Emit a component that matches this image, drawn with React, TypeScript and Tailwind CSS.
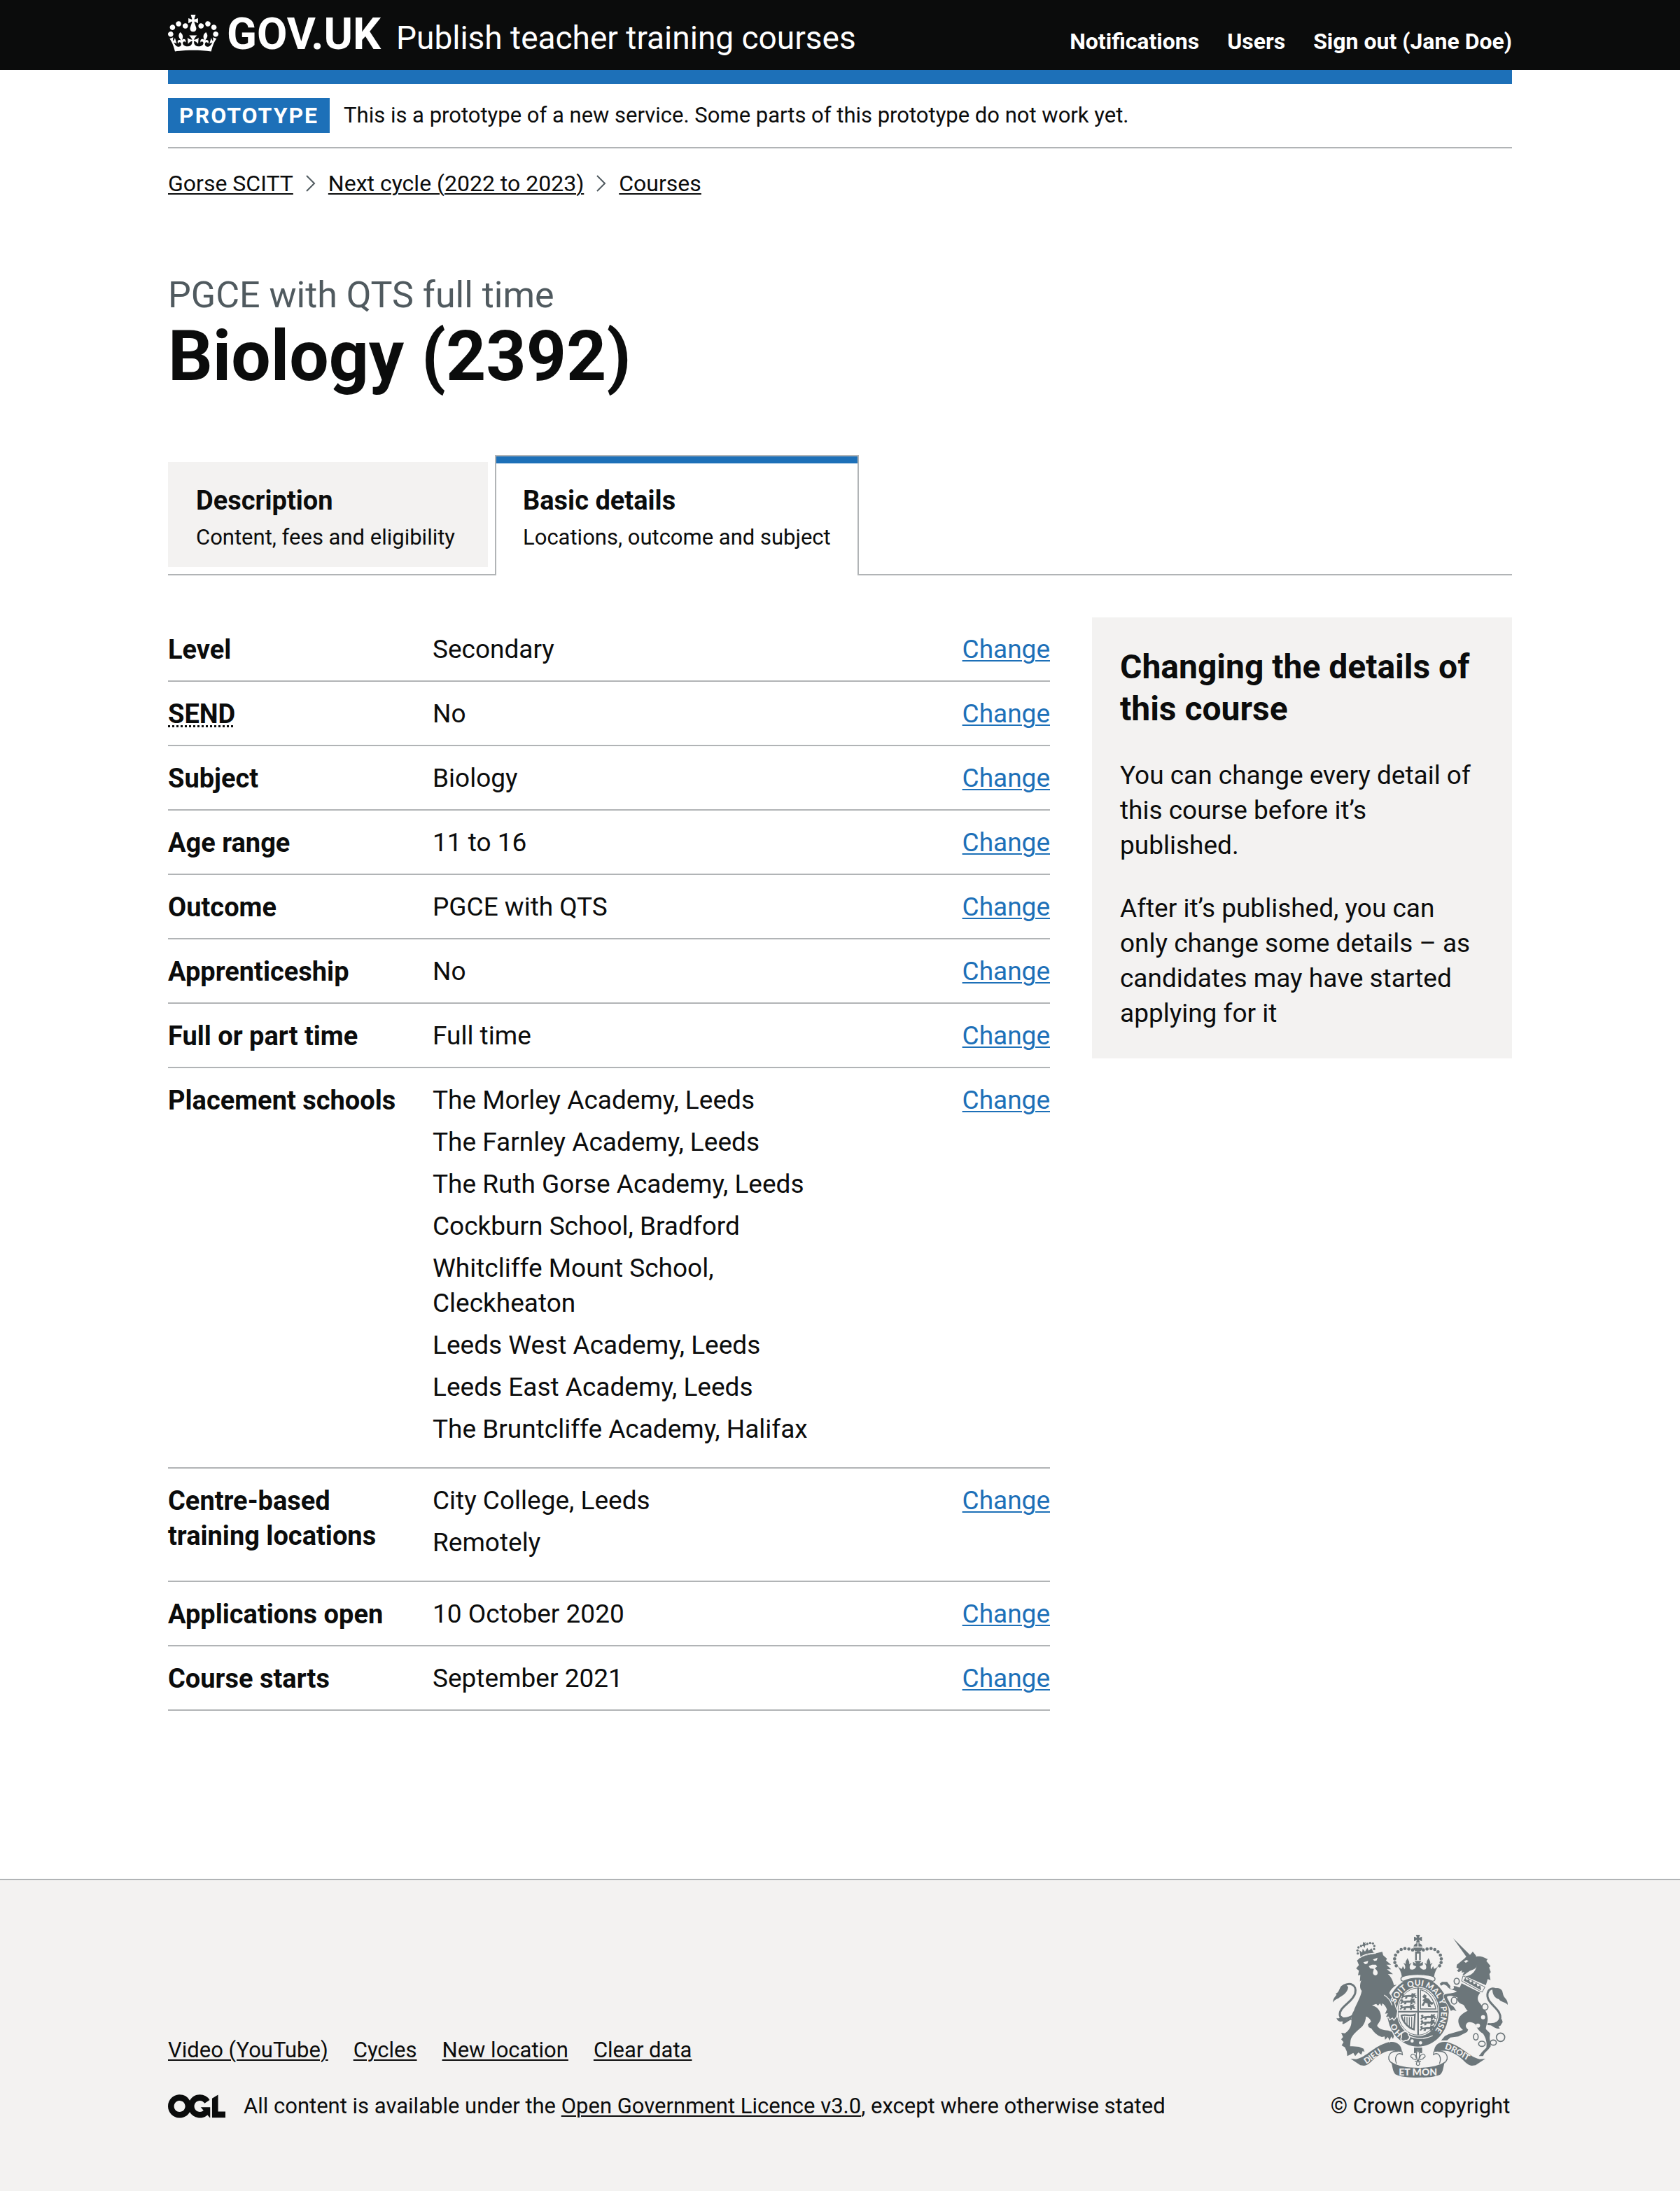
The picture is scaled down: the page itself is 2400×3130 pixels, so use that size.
import type { ReactNode } from "react";

const navigation = ["Notifications", "Users", "Sign out (Jane Doe)"];
const breadcrumbs = ["Gorse SCITT", "Next cycle (2022 to 2023)", "Courses"];
const footerLinks = ["Video (YouTube)", "Cycles", "New location", "Clear data"];

type Detail = { key: string; values: string[]; abbreviation?: string };

const details: Detail[] = [
  { key: "Level", values: ["Secondary"] },
  { key: "SEND", values: ["No"], abbreviation: "Special educational needs and disability" },
  { key: "Subject", values: ["Biology"] },
  { key: "Age range", values: ["11 to 16"] },
  { key: "Outcome", values: ["PGCE with QTS"] },
  { key: "Apprenticeship", values: ["No"] },
  { key: "Full or part time", values: ["Full time"] },
  {
    key: "Placement schools",
    values: [
      "The Morley Academy, Leeds",
      "The Farnley Academy, Leeds",
      "The Ruth Gorse Academy, Leeds",
      "Cockburn School, Bradford",
      "Whitcliffe Mount School, Cleckheaton",
      "Leeds West Academy, Leeds",
      "Leeds East Academy, Leeds",
      "The Bruntcliffe Academy, Halifax",
    ],
  },
  { key: "Centre-based training locations", values: ["City College, Leeds", "Remotely"] },
  { key: "Applications open", values: ["10 October 2020"] },
  { key: "Course starts", values: ["September 2021"] },
];

function Container({ children, className = "" }: { children: ReactNode; className?: string }) {
  return <div className={`mx-auto w-4/5 max-w-[1920px] ${className}`}>{children}</div>;
}

function TextLink({ children, label }: { children: ReactNode; label?: string }) {
  return (
    <a href="#" aria-label={label} className="underline decoration-2 underline-offset-[3px]">
      {children}
    </a>
  );
}

function CrownIcon() {
  return (
    <svg aria-hidden="true" viewBox="0 0 132 97" className="h-[53px] w-[72px]" fill="currentColor">
      <path d="M25 30.2c3.5 1.5 7.7-.2 9.1-3.7 1.5-3.6-.2-7.8-3.9-9.2-3.6-1.4-7.6.3-9.1 3.9-1.4 3.5.3 7.5 3.9 9zM9 39.5c3.6 1.5 7.8-.2 9.2-3.7 1.5-3.6-.2-7.8-3.9-9.1-3.6-1.5-7.6.2-9.1 3.8-1.4 3.5.3 7.5 3.8 9zM4.4 57.2c3.5 1.5 7.7-.2 9.1-3.8 1.5-3.6-.2-7.7-3.9-9.1-3.5-1.5-7.6.3-9.1 3.8-1.4 3.5.3 7.6 3.9 9.1zm38.3-21.4c3.5 1.5 7.7-.2 9.1-3.8 1.5-3.6-.2-7.7-3.9-9.1-3.6-1.5-7.6.3-9.1 3.8-1.3 3.6.4 7.7 3.9 9.1zm64.4-5.6c-3.6 1.5-7.8-.2-9.1-3.7-1.5-3.6.2-7.8 3.8-9.2 3.6-1.4 7.7.3 9.2 3.9 1.3 3.5-.4 7.5-3.9 9zm15.9 9.3c-3.6 1.5-7.7-.2-9.1-3.7-1.5-3.6.2-7.8 3.7-9.1 3.6-1.5 7.7.2 9.2 3.8 1.5 3.5-.3 7.5-3.8 9zm4.7 17.7c-3.6 1.5-7.8-.2-9.2-3.8-1.5-3.6.2-7.7 3.9-9.1 3.6-1.5 7.7.3 9.2 3.8 1.3 3.5-.4 7.6-3.9 9.1zM89.3 35.8c-3.6 1.5-7.8-.2-9.2-3.8-1.4-3.6.2-7.7 3.9-9.1 3.6-1.5 7.7.3 9.2 3.8 1.4 3.6-.3 7.7-3.9 9.1zM69.7 17.7l8.9 4.7V9.3l-8.9 2.8c-.2-.3-.5-.6-.9-.9L72.4 0H59.6l3.5 11.2c-.3.3-.6.5-.9.9l-8.8-2.8v13.1l8.8-4.7c.3.3.6.7.9.9l-5 15.4v.1c-.2.8-.4 1.6-.4 2.4 0 4.1 3.1 7.5 7 8.1h.2c.3 0 .7.1 1 .1.4 0 .7 0 1-.1h.2c4-.6 7.1-4.1 7.1-8.1 0-.8-.1-1.7-.4-2.4V34l-5.1-15.4c.4-.2.7-.6 1-.9zM66 92.8c16.9 0 32.8 1.1 47.1 3.2 4-16.9 8.9-26.7 14-33.5l-9.6-3.4c1 4.9 1.1 7.2 0 10.2-1.5-1.4-3-4.3-4.2-8.7L108.6 76c2.8-2 5-3.2 7.5-3.3-4.4 9.4-10 11.9-13.6 11.2-4.3-.8-6.3-4.6-5.6-7.9 1-4.7 5.7-5.9 8-.5 4.3-8.7-3-11.4-7.6-8.8 7.1-7.2 7.9-13.5 2.1-21.1-8 6.1-8.1 12.3-4.5 20.8-4.7-5.4-12.1-2.5-9.5 6.2 3.4-5.2 7.9-2 7.2 3.1-.6 4.3-6.4 7.8-13.5 7.2-10.3-.9-10.9-8-11.2-13.8 2.5-.5 7.1 1.8 11 7.3L80.2 60c-4.1 4.4-8 5.3-12.3 5.4 1.4-4.4 8-11.6 8-11.6H55.5s6.4 7.2 7.9 11.6c-4.2-.1-8-1-12.3-5.4l1.4 16.4c3.9-5.5 8.5-7.7 10.9-7.3-.3 5.8-.9 12.8-11.1 13.8-7.2.6-12.9-2.9-13.5-7.2-.7-5 3.8-8.3 7.1-3.1 2.7-8.7-4.6-11.6-9.4-6.2 3.7-8.5 3.6-14.7-4.6-20.8-5.8 7.6-5 13.9 2.2 21.1-4.7-2.6-11.9.1-7.7 8.8 2.3-5.5 7.1-4.2 8.1.5.7 3.3-1.3 7.1-5.7 7.9-3.5.7-9-1.8-13.5-11.2 2.5.1 4.7 1.3 7.5 3.3l-4.7-15.4c-1.2 4.4-2.7 7.2-4.3 8.7-1.1-3-.9-5.3 0-10.2l-9.5 3.4c5 6.9 9.9 16.7 14 33.5 14.8-2.1 30.8-3.2 47.7-3.2z" />
    </svg>
  );
}

function LicenceLogo() {
  return (
    <svg aria-hidden="true" viewBox="0 0 483 196" className="h-[34px] w-[82px] shrink-0" fill="currentColor">
      <path d="M421.5 142.8V.1l-50.7 32.3v161.1h112.4v-50.7zm-122.3-9.6A47.12 47.12 0 0 1 221 97.8c0-26 21.1-47.1 47.1-47.1 16.7 0 31.4 8.7 39.7 21.8l42.7-27.2A97.63 97.63 0 0 0 268.1 0c-36.5 0-68.3 20.1-85.1 49.7A98 98 0 0 0 97.8 0C43.9 0 0 43.9 0 97.8s43.9 97.8 97.8 97.8c36.5 0 68.3-20.1 85.1-49.7a97.76 97.76 0 0 0 149.6 25.4l19.4 22.2h3v-87.8h-80l24.3 27.5zM97.8 145c-26 0-47.1-21.1-47.1-47.1s21.1-47.1 47.1-47.1 47.1 21.1 47.1 47.1S123.8 145 97.8 145" />
    </svg>
  );
}

const ink = "#6c767a";
const paper = "#f3f2f1";

const archBeads = [
  [414, 143], [398, 139], [381, 137], [365, 141], [351, 151], [341, 165], [337, 181], [338, 197], [344, 211],
];
const lionCrownBeads = [
  [179, 158], [178, 145], [182, 132], [193, 126], [220, 117], [232, 113], [244, 115], [250, 126], [249, 139],
];

// One of the walking lions in the first and fourth quarters of the shield.
function PassantLion({ x, y }: { x: number; y: number }) {
  return (
    <path
      transform={`translate(${x} ${y})`}
      d="M0 4 L6 0 L12 3 L10 8 L34 5 C40 8 46 4 44 -4 L50 0 L62 -2 L58 6 L66 8 L60 12 L68 18 L58 18 L54 12 L50 22 L42 20 L44 14 L26 14 L24 22 L14 22 L18 14 L8 16 L4 22 L-2 18 L4 12 Z"
    />
  );
}

// Left half of the centre crown and the scroll; the right half is its mirror image.
function MirroredHalf() {
  return (
    <g>
      {archBeads.map(([cx, cy]) => (
        <circle key={`${cx}-${cy}`} cx={cx} cy={cy} r="7" />
      ))}
      <path d="M438 150 H425 V187 H432 V158 H438 Z" />
      <path d="M347 207 C352 214 358 222 368 224 L372 212 L380 226 C384 218 384 210 374 198 L385 203 C382 192 388 188 392 178 C396 188 402 192 399 203 L410 198 C400 210 400 218 404 226 C414 230 424 226 430 214 L416 208 V194 L430 202 L422 190 H438 V248 C410 248 386 252 368 258 C366 240 358 224 347 207 Z" />
      <path d="M438 248 C412 248 390 250 372 257 C360 262 362 276 374 277 C394 268 416 264 438 264" fill={paper} stroke={ink} strokeWidth="4" />
      <path d="M148 609 L172 611 C216 604 244 556 312 538 C345 532 366 548 369 580 L350 578 C316 568 290 580 264 598 C240 616 226 638 206 639 L190 637 Z" />
      <path d="M350 578 C316 574 298 604 324 628 M369 578 C368 592 374 596 368 590 C348 580 334 602 345 630" fill="none" stroke={ink} strokeWidth="4" />
      <path d="M438 648 C392 648 350 642 322 622 C328 640 328 664 340 676 C360 688 400 690 438 690 Z" />
    </g>
  );
}

function RoyalArms() {
  return (
    <svg aria-hidden="true" viewBox="72 78 750 612" className="h-[204px] w-[250px]" fill={ink}>
      <defs>
        <path id="garter" d="M342 372 A100 114 0 1 1 506 492" />
        <path id="garter-start" d="M372 500 C354 486 342 466 336 438" />
        <path id="scroll-left" d="M215 632 C246 616 270 584 318 568" />
        <path id="scroll-right" d="M550 567 C596 578 620 606 678 631" />
      </defs>

      {/* Garter and shield */}
      <ellipse cx="437" cy="409" rx="132" ry="148" />
      <ellipse cx="437" cy="407" rx="91" ry="106" fill={paper} />
      <ellipse cx="437" cy="407" rx="86" ry="101" fill="none" stroke={ink} strokeWidth="3" />
      <path d="M434 304 H441 V404 H524 V411 H441 V508 H434 V411 H350 V404 H434 Z" />
      <PassantLion x={366} y={330} />
      <PassantLion x={362} y={354} />
      <PassantLion x={360} y={378} />
      <PassantLion x={449} y={420} />
      <PassantLion x={448} y={444} />
      <PassantLion x={446} y={468} />
      <path d="M448 314 C478 320 504 350 514 396 H448 Z" fill="none" stroke={ink} strokeWidth="4" />
      <path d="M455 344 L464 332 L474 338 L472 348 L484 352 L494 366 L506 368 L498 378 L488 376 L494 388 L480 386 L478 372 L468 370 L460 384 L452 380 L462 364 L456 358 L466 352 Z" />
      <path d="M366 424 C384 416 404 430 424 420 L420 484 C400 478 372 456 366 424 Z" fill="none" stroke={ink} strokeWidth="7" />
      <path d="M380 428 V452 M390 430 V464 M400 431 V472 M410 430 V478" stroke={ink} strokeWidth="4" />
      <path d="M400 512 C430 526 470 526 500 510" fill="none" stroke={paper} strokeWidth="4" />
      <path d="M366 502 C376 486 398 492 396 508 C408 516 396 534 384 530 C372 540 358 528 366 518 Z" stroke={paper} strokeWidth="5" />
      <circle cx="412" cy="533" r="7" fill={paper} />
      <circle cx="448" cy="541" r="7" fill={paper} />

      {/* Centre crown and scroll */}
      <MirroredHalf />
      <g transform="matrix(-1 0 0 1 874 0)">
        <MirroredHalf />
      </g>
      <path d="M428 78 H446 L441 91 L454 86 V106 L441 100 L446 112 H428 L433 100 L420 106 V86 L433 91 Z" />
      <path d="M418 128 C420 118 428 114 435 113 V128 Z M456 128 C454 118 446 114 439 113 V128 Z M417 133 H457 C455 146 447 150 437 150 C427 150 419 146 417 133 Z" />
      <path d="M420 562 H455 V586 L446 584 L437 568 L428 584 L420 586 Z" />
      <path
        d="M437 572 C424 590 432 602 434 616 H440 C442 602 450 590 437 572 Z M430 608 C428 590 410 582 406 598 C408 608 414 602 416 610 L430 614 M444 608 C446 590 464 582 468 598 C466 608 460 602 458 610 L444 614 M424 620 H450 M434 622 C426 632 432 638 437 638 C442 638 448 632 440 622"
        fill="none"
        stroke={ink}
        strokeWidth="4"
      />

      {/* Lion */}
      <path
        d="M176 188 L194 172 L284 151 L288 166 L304 180 L300 188 L322 206 L302 206 L322 226 L304 226 L330 247 L308 246 C322 258 330 276 334 294 L346 292 C328 304 318 316 314 328 C324 342 334 362 340 388 L348 404 L344 428 L334 441 L328 432 L316 440 L312 428 L300 430 L308 414 L296 416 L304 398 C300 386 292 376 284 372 L282 384 L274 372 L266 382 L258 374 L240 380 C262 386 276 402 278 424 C280 448 266 456 262 468 C270 482 290 488 310 488 L326 494 L334 512 L330 524 L322 514 L316 532 L308 516 L296 528 L294 514 L282 516 C262 510 246 494 238 480 L226 474 L222 462 L236 450 C232 436 222 430 214 428 C212 450 206 464 190 478 C170 496 152 510 148 532 L146 556 C160 556 172 558 184 558 L204 566 L208 580 L200 576 L194 592 L182 582 L168 598 L160 584 L146 592 L134 598 L132 578 L124 560 L110 552 L118 538 L108 526 L116 516 L108 498 L124 500 C146 484 152 466 152 446 C150 424 156 414 162 404 C170 380 192 346 196 318 C188 310 186 296 194 272 L188 278 L190 250 L180 252 L184 232 L172 222 L184 208 Z"
        stroke={paper}
        strokeWidth="8"
        paintOrder="stroke"
      />
      <path d="M203 196 L224 190 L220 202 L210 204 Z M244 184 L264 176 L260 188 L250 190 Z" fill={paper} />
      <path d="M226 212 L240 206 L256 206 L262 214 L252 222 C262 230 268 240 262 248 C254 256 244 250 244 240 L248 224 L232 222 Z" fill={paper} />
      <path d="M292 336 C308 346 320 360 326 380" fill="none" stroke={paper} strokeWidth="4" />
      <path d="M190 168 L186 144 L198 154 L200 138 L210 150 L220 134 L226 146 L238 136 L246 154 L252 156 L190 173 Z M201 108 L207 113 L213 108 L211 116 L218 122 L210 124 L209 134 L203 126 L196 126 L201 118 Z" />
      <path d="M188 176 C208 162 232 156 256 158" fill="none" stroke={paper} strokeWidth="4" />
      {lionCrownBeads.map(([cx, cy]) => (
        <circle key={`${cx}-${cy}`} cx={cx} cy={cy} r="5" />
      ))}
      <path d="M118 296 C146 280 176 292 168 328 C158 368 98 386 102 422 C106 444 134 438 160 424" fill="none" stroke={ink} strokeWidth="9" />
      <path d="M72 368 C74 346 84 344 88 334 L84 330 C100 326 98 310 108 298 C118 288 134 290 138 304 C134 330 110 340 96 350 C86 354 78 358 72 368 Z M88 434 C98 440 104 434 106 424 L128 440 L150 434 L154 442 C140 444 138 452 116 461 L112 456 C118 452 116 448 108 450 C98 450 90 444 88 434 Z" />

      {/* Unicorn */}
      <path d="M722 458 C770 470 804 448 784 410 C768 382 726 362 736 326 C742 308 758 304 774 314" fill="none" stroke={ink} strokeWidth="9" />
      <path d="M756 312 C770 302 790 304 798 318 L802 334 C806 352 822 352 822 378 C808 364 790 366 784 354 C764 350 756 330 756 312 Z M744 462 L780 452 L796 438 L800 452 L790 468 L782 470 L788 480 C768 482 758 470 744 462 Z" />
      <path d="M588 93 L660 164 L672 150 L686 168 L686 172 C712 166 724 180 736 182 L730 190 L748 212 L742 218 L749 238 L743 246 L748 272 L736 268 L728 294 L640 256 L628 250 L636 238 L624 240 L626 230 L612 238 L604 232 L612 224 L602 218 L604 206 L636 180 L644 172 Z" />
      <path d="M690 208 C688 228 668 226 654 236 C640 244 640 250 630 250 C640 262 680 254 690 208 Z M634 192 L644 186 L654 190 L642 198 Z" fill={paper} />
      <path
        d="M624 286 L704 326 C692 340 690 352 698 366 C716 388 736 408 736 438 C736 456 728 468 728 482 L746 500 L744 520 L749 556 L738 570 L722 586 L716 598 L698 598 L712 580 L730 562 C734 540 728 520 716 502 C700 492 690 480 684 462 C668 450 652 450 646 458 C640 466 640 474 652 484 L648 494 L610 514 L576 518 L562 530 L536 531 L552 512 L568 504 L630 486 C614 474 606 452 612 436 C618 422 636 410 650 404 C636 392 640 380 626 376 C606 370 604 352 606 346 L580 340 C566 340 560 340 562 348 L578 378 L590 386 L602 405 L588 400 L578 404 L568 384 C558 366 544 346 548 336 C560 326 588 332 604 320 C588 312 574 316 560 296 L548 290 L536 296 L530 288 L540 280 L562 280 L576 298 C588 294 606 300 616 304 Z"
        stroke={paper}
        strokeWidth="6"
        paintOrder="stroke"
      />
      <path d="M630 254 L724 302 L712 324 L624 276 Z" fill={paper} stroke={ink} strokeWidth="3" />
      <path d="M632 274 L640 262 L646 272 L656 268 L660 282 L672 276 L676 290 L688 284 L692 300 L704 294 L708 316 Z" />
      <g fill="none" stroke={ink} strokeWidth="5">
        <ellipse cx="603" cy="277" rx="11" ry="13" />
        <ellipse cx="592" cy="360" rx="12" ry="15" fill={paper} />
        <ellipse cx="724" cy="387" rx="13" ry="14" fill={paper} />
        <ellipse cx="685" cy="515" rx="10" ry="14" />
        <ellipse cx="711" cy="545" rx="14" ry="11" fill={paper} />
        <ellipse cx="760" cy="540" rx="13" ry="11" />
        <circle cx="791" cy="517" r="18" />
      </g>
      <g fill={paper}>
        <circle cx="583" cy="303" r="8" />
        <circle cx="716" cy="431" r="9" />
        <circle cx="694" cy="467" r="9" />
      </g>

      {/* Mottoes */}
      <g fill={paper} fontFamily="Lato, sans-serif" fontWeight="900">
        <text fontSize="35">
          <textPath href="#garter">SOIT QUI MAL Y PENSE</textPath>
        </text>
        <text fontSize="35">
          <textPath href="#garter-start">HO</textPath>
        </text>
        <text fontSize="35">
          <textPath href="#scroll-left">DIEU</textPath>
        </text>
        <text fontSize="36">
          <textPath href="#scroll-right">DROIT</textPath>
        </text>
        <text x="437" y="682" fontSize="42" textAnchor="middle">
          ET MON
        </text>
      </g>
    </svg>
  );
}

function Header() {
  return (
    <header className="bg-[#0b0c0c] text-white">
      <Container className="flex h-[100px] items-start justify-between">
        <div className="flex items-start">
          <a href="#" className="mr-[22px] flex items-start gap-3">
            <span className="mt-[21px]">
              <CrownIcon />
            </span>
            <span className="mt-5 text-[63px] leading-[58px] font-bold">GOV.UK</span>
          </a>
          <a href="#" className="mt-[25px] text-[46px] leading-[58px]">
            Publish teacher training courses
          </a>
        </div>
        <nav aria-label="Account" className="mt-[39px]">
          <ul className="flex gap-10 text-[32px] leading-10 font-bold">
            {navigation.map((label) => (
              <li key={label}>
                <a href="#">{label}</a>
              </li>
            ))}
          </ul>
        </nav>
      </Container>
    </header>
  );
}

function Breadcrumbs() {
  return (
    <nav aria-label="Breadcrumb" className="mt-[30px]">
      <ol className="flex items-center text-[32px] leading-10">
        {breadcrumbs.map((label, index) => (
          <li key={label} className="flex items-center">
            {index > 0 && (
              <svg
                aria-hidden="true"
                viewBox="0 0 14 24"
                className="mr-[18px] ml-[18px] h-6 w-[14px]"
                fill="none"
                stroke="#505a5f"
                strokeWidth="2"
              >
                <path d="M1 1 L12 12 L1 23" />
              </svg>
            )}
            <TextLink>{label}</TextLink>
          </li>
        ))}
      </ol>
    </nav>
  );
}

function Tabs() {
  return (
    <nav aria-label="Course sections" className="mt-[84px] border-b-2 border-[#b1b4b6]">
      <ul className="flex items-end">
        <li className="mr-[10px] mb-[10px]">
          <a href="#" className="block min-w-[457px] bg-[#f3f2f1] px-10 pt-[30px] pb-[22px]">
            <span className="block text-[38px] leading-[50px] font-bold">Description</span>
            <span className="mt-2 block text-[31px] leading-10">Content, fees and eligibility</span>
          </a>
        </li>
        <li className="-mb-[2px]">
          <a href="#" aria-current="page" className="block border-2 border-b-0 border-[#b1b4b6] bg-white">
            <span className="block h-[10px] bg-[#1d70b8]" />
            <span className="block px-[38px] pt-7 pb-[34px]">
              <span className="block text-[38px] leading-[50px] font-bold">Basic details</span>
              <span className="mt-2 block text-[31px] leading-10">Locations, outcome and subject</span>
            </span>
          </a>
        </li>
      </ul>
    </nav>
  );
}

function DetailRow({ detail }: { detail: Detail }) {
  return (
    <div className="flex border-b-2 border-[#b1b4b6] pt-[21px] pb-[19px] text-[37px] leading-[50px]">
      <dt className="w-[30%] pr-10 text-[38px] font-bold">
        {detail.abbreviation ? (
          <abbr
            title={detail.abbreviation}
            className="underline decoration-dotted decoration-[3px] underline-offset-[3px] [text-decoration-skip-ink:none]"
          >
            {detail.key}
          </abbr>
        ) : (
          detail.key
        )}
      </dt>
      <dd className="w-1/2 pr-10">
        {detail.values.length > 1 ? (
          <ul>
            {detail.values.map((value) => (
              <li key={value} className="mb-[10px]">
                {value}
              </li>
            ))}
          </ul>
        ) : (
          detail.values[0]
        )}
      </dd>
      <dd className="w-1/5 text-right text-[#1d70b8]">
        <TextLink label={`Change ${detail.key.toLowerCase()}`}>Change</TextLink>
      </dd>
    </div>
  );
}

function Aside() {
  return (
    <aside className="w-[600px] shrink-0 bg-[#f3f2f1] px-10 pt-[41px] pb-[39px]">
      <h2 className="text-[48px] leading-[60px] font-bold">Changing the details of this course</h2>
      <p className="mt-10 text-[37px] leading-[50px]">
        You can change every detail of this course before it’s published.
      </p>
      <p className="mt-10 text-[37px] leading-[50px]">
        After it’s published, you can only change some details – as candidates may have started applying for it
      </p>
    </aside>
  );
}

function Footer() {
  return (
    <footer className="border-t-2 border-[#b1b4b6] bg-[#f3f2f1] pt-[78px] pb-[101px]">
      <Container className="flex items-end justify-between text-[31px] leading-10">
        <div>
          <ul className="mb-10 flex gap-9">
            {footerLinks.map((label) => (
              <li key={label}>
                <TextLink>{label}</TextLink>
              </li>
            ))}
          </ul>
          <div className="flex items-center gap-[26px]">
            <LicenceLogo />
            <p>
              All content is available under the <TextLink>Open Government Licence v3.0</TextLink>, except where
              otherwise stated
            </p>
          </div>
        </div>
        <a href="#" className="flex min-w-[262px] flex-col items-center gap-[21px]">
          <RoyalArms />
          <span>© Crown copyright</span>
        </a>
      </Container>
    </footer>
  );
}

export default function App() {
  return (
    <div className="bg-white font-[Roboto,sans-serif] text-[#0b0c0c]">
      <Header />
      <Container>
        <div className="h-5 bg-[#1d70b8]" />
        <div className="flex items-center gap-5 border-b-2 border-[#b1b4b6] py-5">
          <strong className="bg-[#1d70b8] px-4 text-[32px] leading-[50px] tracking-[2px] text-white">PROTOTYPE</strong>
          <p className="text-[31px] leading-[50px]">
            This is a prototype of a new service. Some parts of this prototype do not work yet.
          </p>
        </div>
        <Breadcrumbs />
        <main className="mt-[110px]">
          <h1 className="text-[100px] leading-[114px] font-bold">
            <span className="block text-[52px] leading-[60px] font-normal text-[#505a5f]">PGCE with QTS full time</span>
            Biology (2392)
          </h1>
          <Tabs />
          <div className="mt-[60px] mb-60 flex items-start gap-[60px]">
            <dl className="flex-1">
              {details.map((detail) => (
                <DetailRow key={detail.key} detail={detail} />
              ))}
            </dl>
            <Aside />
          </div>
        </main>
      </Container>
      <Footer />
    </div>
  );
}
